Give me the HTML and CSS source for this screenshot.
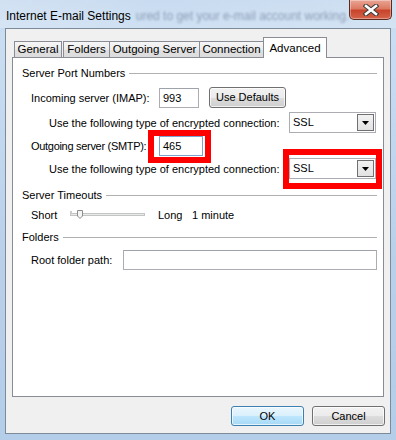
FILE: index.html
```html
<!DOCTYPE html>
<html>
<head>
<meta charset="utf-8">
<title>Internet E-mail Settings</title>
<link rel="stylesheet" href="styles.css">
</head>
<body>
<div class="window">
  <div class="titlebar">
    <span class="title">Internet E-mail Settings</span>
    <span class="behind">ured to get your e-mail account working.</span>
    <div class="close">
      <svg width="16" height="12" viewBox="0 0 16 12">
        <path d="M3 2 L13 10 M13 2 L3 10" stroke="#3b3b3b" stroke-width="4.6" stroke-linecap="square" fill="none"/>
        <path d="M3 2 L13 10 M13 2 L3 10" stroke="#ffffff" stroke-width="2.6" stroke-linecap="square" fill="none"/>
      </svg>
    </div>
  </div>
  <div class="client">
    <div class="tabs">
      <div class="tab tab-general">General</div>
      <div class="tab tab-folders">Folders</div>
      <div class="tab tab-outgoing">Outgoing Server</div>
      <div class="tab tab-connection">Connection</div>
      <div class="tab tab-advanced active">Advanced</div>
    </div>
    <div class="panel">
      <div class="group g-ports"><span class="group-label">Server Port Numbers</span><span class="rule"></span></div>
      <div class="row r-incoming">
        <span class="lbl lbl-port">Incoming server (IMAP):</span>
        <span class="textbox port-in">993</span>
        <span class="btn btn-defaults">Use Defaults</span>
      </div>
      <div class="row r-enc1">
        <span class="lbl lbl-enc">Use the following type of encrypted connection:</span>
        <span class="combo"><span class="combo-text">SSL</span><span class="drop"><svg width="7" height="4" viewBox="0 0 7 4"><path d="M0 0 H7 L3.5 4 Z" fill="#000"/></svg></span></span>
      </div>
      <div class="row r-outgoing">
        <span class="lbl lbl-port lbl-tight">Outgoing server (SMTP):</span>
        <span class="mark mark-port"><span class="textbox port-out">465</span></span>
      </div>
      <div class="row r-enc2">
        <span class="lbl lbl-enc">Use the following type of encrypted connection:</span>
        <span class="mark mark-combo"><span class="combo"><span class="combo-text">SSL</span><span class="drop"><svg width="7" height="4" viewBox="0 0 7 4"><path d="M0 0 H7 L3.5 4 Z" fill="#000"/></svg></span></span></span>
      </div>
      <div class="group g-timeouts"><span class="group-label">Server Timeouts</span><span class="rule"></span></div>
      <div class="row r-timeout">
        <span class="lbl lbl-short">Short</span>
        <svg class="slider" width="75" height="20" viewBox="0 0 75 20">
          <rect x="0.5" y="8.5" width="74" height="2" fill="#e7eaea" stroke="#c4c4c4" stroke-width="1"/>
          <path d="M1 6 V8" stroke="#9a9a9a" stroke-width="1"/>
          <path d="M7.5 5.5 H12.5 V11 L10 13.5 L7.5 11 Z" fill="#f4f4f4" stroke="#8c8c8c" stroke-width="1"/>
        </svg>
        <span class="lbl lbl-long">Long</span>
        <span class="lbl">1 minute</span>
      </div>
      <div class="group g-folders"><span class="group-label">Folders</span><span class="rule"></span></div>
      <div class="row r-root">
        <span class="lbl lbl-root">Root folder path:</span>
        <span class="textbox root"></span>
      </div>
    </div>
    <div class="buttons">
      <span class="btn btn-ok">OK</span>
      <span class="btn btn-cancel">Cancel</span>
    </div>
  </div>
</div>
</body>
</html>
```

FILE: styles.css
```css
html, body {
  margin: 0;
  padding: 0;
}
body {
  width: 396px;
  height: 440px;
  overflow: hidden;
  font-family: "Liberation Sans", Arial, sans-serif;
  font-size: 11px;
  color: #000;
}
.window {
  width: 396px;
  height: 440px;
  display: flex;
  flex-direction: column;
  background: linear-gradient(to bottom, #c2d7ee 0%, #cadef2 8%, #b9d0ea 60%, #b4cde8 100%);
  box-sizing: border-box;
}
.titlebar {
  height: 28px;
  display: flex;
  align-items: flex-start;
  background: linear-gradient(to right, rgba(255,255,255,0.25), rgba(255,255,255,0.1) 40%, rgba(255,255,255,0.2));
}
.title {
  margin-left: 6px;
  margin-top: 9px;
  line-height: 15px;
  font-size: 12px;
  white-space: nowrap;
}
.behind {
  margin-left: 5px;
  margin-top: 9px;
  line-height: 15px;
  font-size: 12px;
  white-space: nowrap;
  color: rgba(60, 80, 110, 0.45);
  filter: blur(1.3px);
}
.close {
  margin-left: auto;
  margin-right: 4px;
  width: 44px;
  height: 19px;
  border: 1px solid #5d2a20;
  border-top: none;
  border-radius: 0 0 5px 5px;
  background: linear-gradient(to bottom, #e9a595 0%, #dd7a63 45%, #c8442b 55%, #d4644a 100%);
  display: flex;
  align-items: center;
  justify-content: center;
  box-shadow: inset 0 0 0 1px rgba(255,255,255,0.35);
}
.client {
  margin: 0 5px 0 5px;
  height: 404px;
  border: 1px solid #7d8a9a;
  background: #f0f0f0;
  display: flex;
  flex-direction: column;
}
.tabs {
  margin-top: 8px;
  margin-left: 8px;
  height: 20px;
  display: flex;
  align-items: flex-end;
}
.tab {
  height: 15px;
  border: 1px solid #898c95;
  border-bottom: none;
  background: linear-gradient(to bottom, #f6f6f6 0%, #ececec 50%, #e0e0e0 51%, #dcdcdc 100%);
  display: flex;
  align-items: center;
  justify-content: center;
  line-height: 15px;
  font-size: 11.5px;
  white-space: nowrap;
  box-sizing: content-box;
}
.tab-general { width: 46px; }
.tab-folders { width: 45px; margin-left: 1px; }
.tab-outgoing { width: 89px; margin-left: -1px; }
.tab-connection { width: 63px; margin-left: -1px; }
.tab-advanced { width: 62px; margin-left: -1px; }
.tab.active {
  height: 20px;
  margin-bottom: -1px;
  background: #fff;
  position: relative;
  z-index: 1;
}
.panel {
  margin-left: 6px;
  height: 338px;
  width: 355px;
  border: 1px solid #898c95;
  background: #fff;
  padding: 0 6px 0 9px;
  box-sizing: content-box;
  display: flex;
  flex-direction: column;
}
.group {
  height: 16px;
  display: flex;
  align-items: center;
  white-space: nowrap;
}
.rule {
  flex: 1;
  height: 1px;
  margin-left: 4px;
  background: #b0b0b0;
}
.g-ports { margin-top: 7px; }
.g-timeouts { margin-top: 8px; }
.g-folders { margin-top: 4px; }
.row {
  display: flex;
  align-items: center;
  height: 21px;
  white-space: nowrap;
}
.r-incoming { margin-top: 6px; padding-left: 9px; }
.r-enc1 { margin-top: 4px; padding-left: 27px; }
.r-outgoing { margin-top: 2px; padding-left: 9px; }
.r-enc2 { margin-top: 2px; padding-left: 27px; }
.r-timeout { margin-top: 2px; padding-left: 9px; height: 20px; }
.r-root { margin-top: 4px; padding-left: 9px; }
.lbl-port { width: 128px; }
.lbl-tight { letter-spacing: -0.3px; }
.lbl-enc { width: 240px; }
.lbl-short { width: 39px; }
.lbl-long { width: 34px; margin-left: 13px; }
.lbl-root { width: 92px; }
.textbox {
  box-sizing: border-box;
  height: 20px;
  border: 1px solid #abadb3;
  border-top-color: #9ea3ab;
  background: #fff;
  padding-left: 3px;
  line-height: 18px;
  display: block;
}
.port-in { width: 40px; }
.port-out { width: 44px; border-color: #7da2ce; }
.root { width: 254px; }
.combo {
  box-sizing: border-box;
  width: 87px;
  height: 21px;
  border: 1px solid #abadb3;
  background: #fff;
  display: flex;
  align-items: center;
  padding: 1px 1px 1px 3px;
}
.combo-text { flex: 1; line-height: 17px; }
.drop {
  box-sizing: border-box;
  width: 17px;
  height: 17px;
  border: 1px solid #707070;
  background: linear-gradient(to bottom, #f2f2f2, #e2e2e2);
  display: flex;
  align-items: center;
  justify-content: center;
}
.slider { display: block; }
.btn {
  box-sizing: border-box;
  height: 21px;
  border: 1px solid #707070;
  border-radius: 3px;
  background: linear-gradient(to bottom, #f2f2f2 0%, #ebebeb 50%, #dddddd 51%, #cfcfcf 100%);
  box-shadow: inset 0 0 0 1px rgba(255,255,255,0.7);
  display: flex;
  align-items: center;
  justify-content: center;
  line-height: 17px;
}
.btn-defaults { width: 77px; margin-left: 10px; }
.buttons {
  margin-top: 9px;
  display: flex;
  justify-content: flex-end;
  padding-right: 5px;
}
.btn-ok, .btn-cancel { width: 73px; height: 20px; }
.btn-cancel { margin-left: 8px; }
.btn-ok {
  border-color: #3c7fb1;
  background: linear-gradient(to bottom, #eaf6fd 0%, #d9f0fc 50%, #bee6fd 51%, #a7d9f5 100%);
}
.mark { position: relative; display: block; }
.mark::after {
  content: "";
  position: absolute;
  border: 6px solid #ff0000;
  pointer-events: none;
}
.mark-port::after { top: -6px; bottom: -7px; left: -11px; right: -8px; }
.mark-combo::after { top: -9px; bottom: -10px; left: -6px; right: -6px; }
```
